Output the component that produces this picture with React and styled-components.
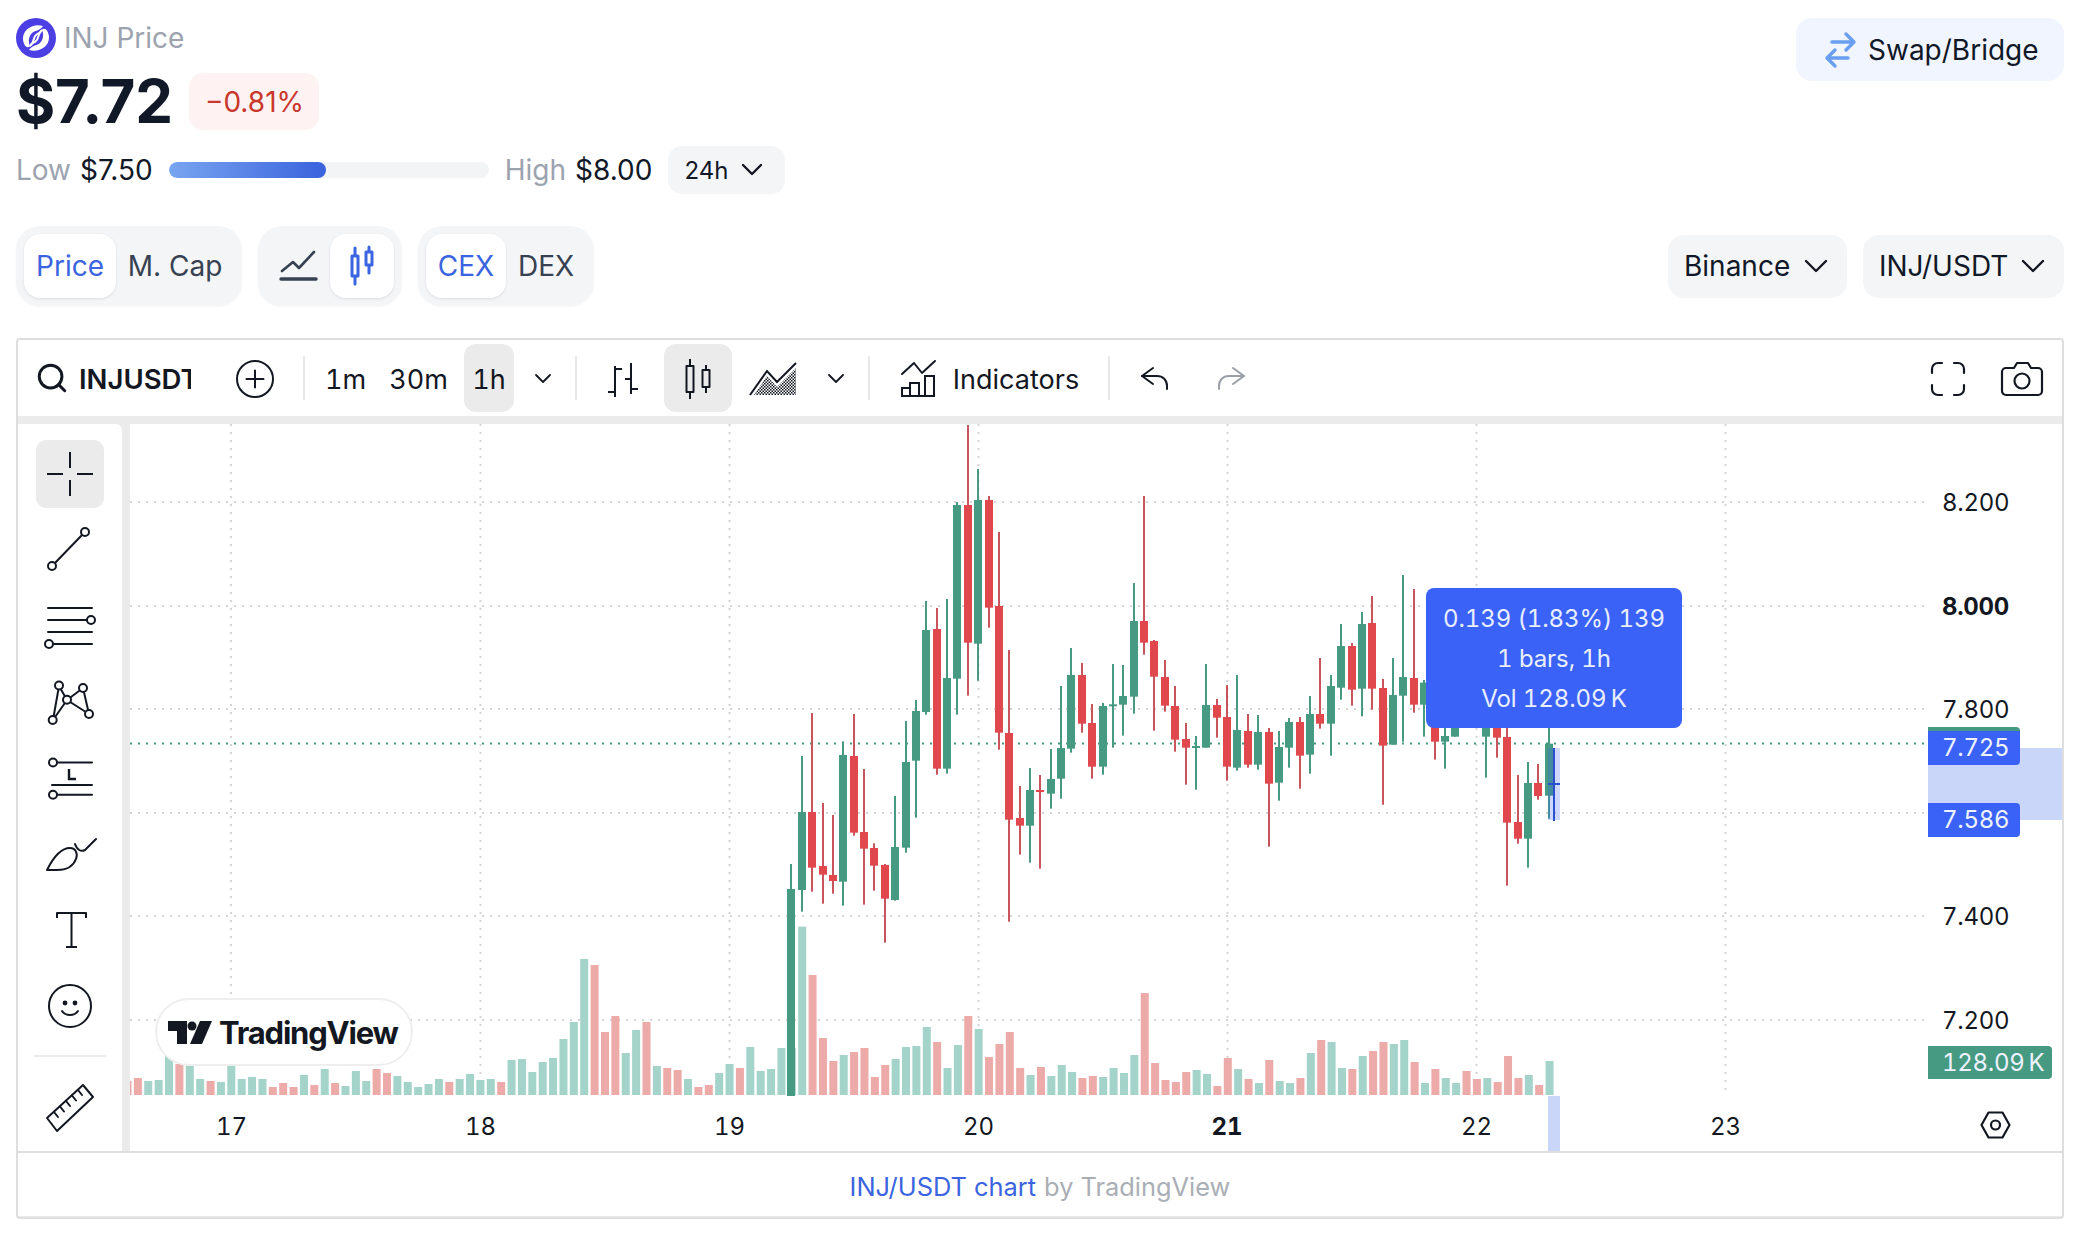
import React from 'react';
import styled, { createGlobalStyle } from 'styled-components';
import { Search } from 'lucide-react';

const GlobalStyle = createGlobalStyle`
  html, body {
    margin: 0;
    padding: 0;
    background: #fff;
    font-family: Inter, "Liberation Sans", sans-serif;
    color: #111827;
  }
  * { box-sizing: border-box; }
`;

const Page = styled.div`
  width: 2076px;
  height: 1236px;
  padding: 18px 12px 0 16px;
  overflow: hidden;
`;

const TopRow = styled.div`
  display: flex;
  justify-content: space-between;
  align-items: flex-start;
`;

const InfoCol = styled.div`
  display: flex;
  flex-direction: column;
`;

const TitleRow = styled.div`
  display: flex;
  align-items: center;
  gap: 8px;
  height: 40px;
  font-size: 28px;
  color: #9ca3af;
`;

const PriceRow = styled.div`
  display: flex;
  align-items: center;
  gap: 16px;
  height: 57px;
  margin-top: 15px;
`;

const BigPrice = styled.div`
  font-size: 60px;
  font-weight: 700;
  letter-spacing: -0.2px;
  color: #111827;
  line-height: 57px;
`;

const ChangeBadge = styled.div`
  display: flex;
  align-items: center;
  height: 57px;
  padding: 0 15px 0 16px;
  border-radius: 14px;
  background: #fef2f2;
  color: #c9372c;
  font-size: 28px;
`;

const RangeRow = styled.div`
  display: flex;
  align-items: center;
  height: 48px;
  margin-top: 16px;
  font-size: 28px;
`;

const Muted = styled.span`
  color: #9ca3af;
  margin-right: 9px;
`;

const Value = styled.span`
  color: #111827;
`;

const RangeTrack = styled.div`
  width: 320px;
  height: 16px;
  margin: 0 16px;
  border-radius: 8px;
  background: #f3f4f6;
  overflow: hidden;
`;

const RangeFill = styled.div`
  height: 100%;
  border-radius: 8px;
  background: linear-gradient(90deg, #78a5f0, #3a62dd);
`;

const PeriodChip = styled.div`
  display: flex;
  align-items: center;
  gap: 14px;
  height: 48px;
  margin-left: 16px;
  padding: 0 23px 0 16px;
  border-radius: 14px;
  background: #f3f5f7;
  font-size: 24px;
`;

const SwapButton = styled.div`
  display: flex;
  align-items: center;
  gap: 13px;
  width: 268px;
  height: 63px;
  padding-left: 29px;
  border-radius: 16px;
  background: #f0f5ff;
  font-size: 28px;
  color: #111827;
`;

const ControlRow = styled.div`
  display: flex;
  justify-content: space-between;
  align-items: center;
  height: 80px;
  margin-top: 32px;
`;

const Groups = styled.div`
  display: flex;
  gap: 16px;
`;

const Segment = styled.div`
  display: flex;
  height: 80px;
  padding: 8px;
  border-radius: 24px;
  background: #f3f5f7;
  box-shadow: 0 1px 2px rgba(17, 24, 39, 0.04);
`;

const SegmentItem = styled.div`
  display: flex;
  align-items: center;
  justify-content: center;
  width: ${(p) => p.$w}px;
  border-radius: 16px;
  font-size: 28px;
  color: ${(p) => (p.$active ? '#3b64e0' : '#374151')};
  background: ${(p) => (p.$active ? '#fff' : 'transparent')};
  box-shadow: ${(p) => (p.$active ? '0 1px 3px rgba(17, 24, 39, 0.1)' : 'none')};
`;

const Selects = styled.div`
  display: flex;
  gap: 16px;
`;

const SelectBox = styled.div`
  display: flex;
  align-items: center;
  justify-content: space-between;
  width: ${(p) => p.$w}px;
  height: 63px;
  padding: 0 20px 0 16px;
  border-radius: 16px;
  background: #f3f5f7;
  font-size: 28px;
  color: #111827;
`;

const ChartFrame = styled.div`
  height: 881px;
  margin-top: 32px;
  border: 2px solid #dedede;
  border-radius: 4px;
  background: #ebebeb;
  overflow: hidden;
`;

const TvToolbar = styled.div`
  display: flex;
  align-items: center;
  height: 76px;
  margin-bottom: 8px;
  background: #fff;
  color: #131722;
  font-variant-numeric: tabular-nums;
`;

const SearchBox = styled.div`
  display: flex;
  align-items: center;
  gap: 10px;
  width: 190px;
  padding-left: 17px;
`;

const SymbolName = styled.div`
  width: 112px;
  overflow: hidden;
  white-space: nowrap;
  font-size: 27.500px;
  font-weight: 600;
  padding-top: 1px;
`;

const TvButton = styled.div`
  display: flex;
  align-items: center;
  justify-content: center;
  gap: 17px;
  flex: none;
  width: ${(p) => p.$w}px;
  height: 68px;
  margin-left: ${(p) => p.$ml || 0}px;
  padding-top: 2px;
  border-radius: 12px;
  background: ${(p) => (p.$active ? '#ebebeb' : 'transparent')};
  font-size: 27px;
  color: #131722;
`;

const TvSep = styled.div`
  flex: none;
  width: 2px;
  height: 44px;
  margin-left: ${(p) => p.$ml}px;
  background: #e8e8e8;
`;

const Spacer = styled.div`
  flex: 1;
`;

const ChartBody = styled.div`
  display: flex;
  gap: 8px;
  height: 727px;
`;

const LeftTools = styled.div`
  display: flex;
  flex-direction: column;
  align-items: center;
  gap: 8px;
  flex: none;
  width: 104px;
  padding-top: 16px;
  border-top-right-radius: 6px;
  background: #fff;
`;

const ToolButton = styled.div`
  display: flex;
  align-items: center;
  justify-content: center;
  flex: none;
  width: 68px;
  height: 68px;
  border-radius: 10px;
  background: ${(p) => (p.$active ? '#ebebeb' : 'transparent')};
`;

const ToolDivider = styled.div`
  flex: none;
  width: 72px;
  height: 2px;
  margin: 7px 0 9px;
  background: #ebebeb;
`;

const Plot = styled.div`
  position: relative;
  flex: 1;
  background: #fff;
  overflow: hidden;
`;

const PlotSvg = styled.svg`
  display: block;
  width: 100%;
  height: 100%;
  font-family: Inter, "Liberation Sans", sans-serif;
  font-variant-numeric: tabular-nums;
`;

const MeasureBox = styled.div`
  position: absolute;
  left: 1296px;
  top: 164px;
  width: 256px;
  height: 140px;
  padding-top: 11px;
  border-radius: 8px;
  background: #3b62f6;
  color: #e9eeff;
  font-size: 24px;
  line-height: 40px;
  text-align: center;
  letter-spacing: -0.1px;
  font-variant-numeric: tabular-nums;
`;

const PriceTag = styled.div`
  position: absolute;
  left: 1798px;
  top: ${(p) => p.$top}px;
  width: ${(p) => p.$w || 92}px;
  height: ${(p) => p.$h}px;
  border-radius: 0 4px 4px 0;
  border-top: ${(p) => (p.$strip ? '4px solid #469a82' : 'none')};
  background: ${(p) => p.$bg};
  color: #eef2ff;
  font-size: 24px;
  line-height: ${(p) => p.$h - (p.$strip ? 4 : 0)}px;
  padding-left: 14px;
  letter-spacing: -0.3px;
  font-variant-numeric: tabular-nums;
`;

const PriceBand = styled.div`
  position: absolute;
  left: 1798px;
  top: 324px;
  right: 0;
  height: 72px;
  background: #c9d6f9;
`;

const TvLogoPill = styled.div`
  position: absolute;
  left: 25px;
  top: 574px;
  display: flex;
  align-items: center;
  gap: 7px;
  width: 258px;
  height: 68px;
  padding-left: 11px;
  border: 2px solid #eeeeee;
  border-radius: 34px;
  background: #fff;
  color: #131722;
  font-size: 31px;
  font-weight: 700;
  letter-spacing: -1.2px;
`;

const ChartFooter = styled.div`
  display: flex;
  align-items: center;
  justify-content: center;
  gap: 8px;
  height: 65px;
  padding-top: 3px;
  border-top: 2px solid #dedede;
  background: #fff;
  font-size: 25.400px;
  color: #aaaeb5;
`;

const FooterLink = styled.span`
  color: #3b64e0;
`;

// chart data, read off the picture at 3x: [x, wickTop, wickBottom, bodyTop, bodyBottom, colour]
const candlesA = [
  [93, 1332, 2028, 1407, 2028, 'g'], [126, 1008, 1475, 1176, 1410, 'g'], [156, 879, 1415, 1176, 1343, 'r'],
  [189, 1149, 1451, 1338, 1364, 'r'], [219, 1185, 1421, 1365, 1383, 'r'], [249, 964, 1457, 1005, 1385, 'g'],
  [282, 882, 1247, 1008, 1238, 'r'], [312, 1047, 1454, 1236, 1286, 'r'], [342, 1270, 1412, 1284, 1337, 'r'],
  [375, 1332, 1568, 1335, 1436, 'r'], [405, 1128, 1442, 1281, 1440, 'g'], [438, 903, 1298, 1026, 1283, 'g'],
  [468, 840, 1193, 873, 1022, 'g'], [498, 543, 884, 630, 876, 'g'], [531, 564, 1064, 627, 1046, 'r'],
  [561, 537, 1061, 774, 1046, 'g'], [591, 246, 884, 255, 776, 'g'], [624, 15, 827, 255, 668, 'r'],
  [654, 147, 782, 240, 671, 'g'], [687, 228, 623, 240, 563, 'r'], [717, 336, 989, 558, 938, 'r'],
  [747, 690, 1505, 939, 1199, 'r'], [780, 1098, 1304, 1194, 1217, 'r'], [810, 1044, 1328, 1110, 1217, 'g'],
  [840, 1065, 1346, 1110, 1115, 'r'], [873, 987, 1166, 1077, 1121, 'g'], [903, 798, 1136, 984, 1076, 'g'],
  [933, 684, 998, 765, 986, 'g'], [966, 729, 938, 765, 911, 'r'], [996, 852, 1076, 909, 1040, 'r'],
  [1029, 849, 1064, 858, 1040, 'g'], [1059, 732, 983, 853, 857, 'g'], [1089, 735, 947, 828, 854, 'g'],
  [1122, 489, 881, 603, 830, 'g'], [1152, 228, 704, 603, 668, 'r'], [1182, 660, 932, 663, 770, 'r'],
];

const candlesB = [
  [75, 720, 875, 771, 857, 'r'], [105, 798, 995, 858, 959, 'r'], [138, 909, 1094, 957, 983, 'r'],
  [168, 948, 1109, 978, 983, 'g'], [198, 732, 983, 855, 983, 'g'], [231, 837, 953, 855, 893, 'r'],
  [261, 795, 1082, 891, 1040, 'r'], [291, 765, 1052, 930, 1043, 'g'], [324, 882, 1043, 933, 1034, 'r'],
  [354, 885, 1049, 936, 1034, 'g'], [387, 924, 1280, 936, 1091, 'r'], [417, 933, 1142, 981, 1088, 'g'],
  [447, 894, 1043, 906, 983, 'g'], [480, 891, 1106, 906, 1007, 'r'], [510, 828, 1061, 882, 1004, 'g'],
  [540, 714, 926, 882, 911, 'r'], [573, 765, 1007, 798, 911, 'g'], [603, 612, 839, 678, 803, 'g'],
  [636, 669, 857, 678, 809, 'r'], [666, 576, 889, 612, 806, 'g'], [696, 528, 869, 609, 806, 'r'],
  [729, 777, 1154, 804, 977, 'r'], [759, 714, 974, 825, 974, 'g'], [789, 465, 965, 771, 827, 'g'],
  [822, 507, 878, 774, 854, 'r'], [852, 780, 950, 788, 854, 'g'], [885, 800, 1019, 850, 965, 'r'],
  [915, 850, 1046, 948, 965, 'g'], [945, 840, 950, 880, 950, 'g'], [1038, 800, 1073, 850, 950, 'g'],
  [1071, 800, 1013, 880, 953, 'r'], [1101, 900, 1397, 951, 1208, 'r'], [1134, 1065, 1271, 1206, 1256, 'r'],
  [1164, 1026, 1343, 1089, 1256, 'g'], [1194, 1032, 1139, 1089, 1128, 'r'], [1227, 920, 1196, 971, 1127, 'g'],
];

const allCandles = [
  ...candlesA.map((c) => [760 + c[0] / 3, ...c.slice(1)]),
  ...candlesB.map((c) => [1140 + c[0] / 3, ...c.slice(1)]),
];

const volumeLeft = `r423 r414 g423 g420 g345 r372 g378 g417 r423 g426 g378 g417 g411 g417 r441 r429 r441 g405 r435 g387
  r429 g438 g393 g423 r387 r399 g408 g426 g441 g432 g417 r426 g417 g402 g420 g417 r426 g360 g357 g396 g366 g354 g297
  g246 g57 r75 r276 r228 g339 g270 r246 g378 r384 r390 g417 r441 r435 g399 g372 r384 g321 g393 g387 g324 g324 g-40`;

const volumeRight = `r105 r294 r363 g345 r336 r324 r411 r375 g357 g321 g318 g261 r306 g384 g315 r228 g267 r351 r312 r276
  r384 g405 r381 g408 g375 g396 r414 r408 g411 g384 g399 g345 r159 r369 r420 r426 r396 g390 g402 r438 r354 g387 r417 g429
  r360 g423 g429 r414 g339 r300 g306 g384 r387 g348 r333 r306 g312 g300 r366 g429 r387 g414 g429 r393 r417 g414 r426 r348
  r414 g405 r435 g363`;

const volumes = `${volumeLeft} ${volumeRight}`
  .trim()
  .split(/\s+/)
  .map((t, i) => ({ x: 127.5 + i * 10.38, top: 940 + Number(t.slice(1)) / 3, red: t[0] === 'r' }));

const GREEN = '#469a82';
const RED = '#e0484e';
const RED_WICK = '#c9545c';
const GRID = '#d4d4d4';
const INK = '#131722';

const gridX = [231, 480.500, 729.500, 978.500, 1227.500, 1476.500, 1725.500];
const gridY = [502, 606, 709, 813, 916, 1020];

const priceTicks = [
  { y: 502, label: '8.200' },
  { y: 606, label: '8.000', bold: true },
  { y: 709, label: '7.800' },
  { y: 916, label: '7.400' },
  { y: 1020, label: '7.200' },
];

const timeTicks = [
  { x: 231.500, label: '17' },
  { x: 480.500, label: '18' },
  { x: 729.500, label: '19' },
  { x: 978.500, label: '20' },
  { x: 1227, label: '21', bold: true },
  { x: 1476.500, label: '22' },
  { x: 1725.500, label: '23' },
];

const ChartDrawing = () => (
  <PlotSvg viewBox="130 424 1932 727">
    <defs>
      <clipPath id="plot-clip">
        <rect x="130" y="424" width="1798" height="727" />
      </clipPath>
    </defs>
    <g stroke={GRID} strokeWidth="2" strokeDasharray="2 6">
      {gridX.map((x) => (
        <line key={x} x1={x} x2={x} y1="424" y2="1096" />
      ))}
      {gridY.map((y) => (
        <line key={y} x1="130" x2="1924" y1={y} y2={y} />
      ))}
    </g>
    <line x1="130" x2="1924" y1="743.500" y2="743.500" stroke={GREEN} strokeWidth="2" strokeDasharray="2 6" />
    <g clipPath="url(#plot-clip)">
      {volumes.map((v, i) => (
        <rect key={i} x={v.x - 4} y={v.top} width="8" height={1095 - v.top} fill={v.red ? '#ecaaa8' : '#a3d3c9'} />
      ))}
      {allCandles.map(([x, wt, wb, bt, bb, c], i) => {
        const y = (n) => 420 + n / 3;
        return (
          <g key={i}>
            <rect x={x - 1} y={y(wt)} width="2" height={(wb - wt) / 3} fill={c === 'r' ? RED_WICK : GREEN} />
            <rect x={x - 4} y={y(bt)} width="8" height={Math.max((bb - bt) / 3, 2)} fill={c === 'r' ? RED : GREEN} />
          </g>
        );
      })}
    </g>
    <rect x="1548" y="748" width="12" height="72" fill="#3b62f6" opacity="0.25" />
    <rect x="1553" y="748" width="2" height="73" fill="#2c4fd0" />
    <rect x="1548" y="783" width="12" height="2" fill="#2c4fd0" />
    <rect x="1548" y="1096" width="12" height="55" fill="#c9d6f9" />
    <g fontSize="24" fill={INK}>
      {priceTicks.map((t) => (
        <text key={t.label} x="1942" y={t.y + 9} fontWeight={t.bold ? 700 : 400} letterSpacing="-0.3">
          {t.label}
        </text>
      ))}
      {timeTicks.map((t) => (
        <text key={t.label} x={t.x} y="1135" textAnchor="middle" fontWeight={t.bold ? 700 : 400}>
          {t.label}
        </text>
      ))}
    </g>
    <path d="M1981.500 1125l7-12.500h14l7 12.500-7 12.500h-14z" fill="none" stroke={INK} strokeWidth="2.200" strokeLinejoin="round" />
    <circle cx="1995.500" cy="1125" r="4.500" fill="none" stroke={INK} strokeWidth="2.200" />
  </PlotSvg>
);

const Svg = ({ w, h, children, color = INK, sw = 2, dy = 0, dx = 0 }) => (
  <svg
    width={w}
    height={h}
    viewBox={`${-dx} ${-dy} ${w} ${h}`}
    fill="none"
    stroke={color}
    strokeWidth={sw}
    strokeLinecap="round"
    strokeLinejoin="round"
    style={{ overflow: 'visible', flex: 'none' }}
  >
    {children}
  </svg>
);

const Chevron = ({ w = 22, color = INK, sw = 2.4 }) => (
  <Svg w={w} h={Math.round(w / 2) + 2} color={color} sw={sw}>
    <path d={`M1 1L${w / 2} ${w / 2}L${w - 1} 1`} />
  </Svg>
);

const InjLogo = () => (
  <svg width="40" height="40" viewBox="0 0 40 40" style={{ flex: 'none' }}>
    <circle cx="20" cy="20" r="20" fill="#4b3fe4" />
    <path
      d="M27 8C18 5 6.500 11 7 21C7.300 27 11 31 14 28.500C11.500 23 13 15 19.500 13C23 12 25.500 10.500 27 8Z"
      fill="#fff"
    />
    <path
      d="M13 32C22 35 33.500 29 33 19C32.700 13 29 9 26 11.500C28.500 17 27 25 20.500 27C17 28 14.500 29.500 13 32Z"
      fill="#fff"
    />
    <path d="M14 28C19 24 17 19 20 17C22 15 25 15 26 12" fill="none" stroke="#fff" strokeWidth="2" />
    <path d="M14 28C15 25 18 25 20 23C23 21 21 16 26 12" fill="none" stroke="#fff" strokeWidth="2" />
  </svg>
);

const SwapIcon = () => (
  <Svg w={30} h={34} color="#6a9eee" sw={3.4}>
    <path d="M7 9H29M21 1l8 8-8 8" />
    <path d="M23 25H2M10 17l-8 8 8 8" />
  </Svg>
);

const LineIcon = () => (
  <Svg w={35} h={30} color="#374151" sw={2.6}>
    <path d="M1 20l11-9 6 6L33 1" />
    <path d="M0 28H35" strokeWidth="3.400" />
  </Svg>
);

const CandleBlueIcon = () => (
  <Svg w={24} h={38} color="#3b64e0" sw={3}>
    <path d="M5 1v36M19 0v26" />
    <rect x="2" y="9" width="6" height="20" fill="#fff" />
    <rect x="16" y="5" width="6" height="13" fill="#fff" />
  </Svg>
);

const PlusCircleIcon = () => (
  <Svg w={38} h={38}>
    <circle cx="19" cy="19" r="18" />
    <path d="M19 10.500v17M10.500 19h17" />
  </Svg>
);

const BarsIcon = () => (
  <Svg w={30} h={36} sw={2}>
    <path d="M7 5v31M7 8h7M0 31h7M23 2v31M17 18h6M23 28h7" strokeLinecap="butt" />
  </Svg>
);

const CandlesIcon = () => (
  <Svg w={24} h={40}>
    <path d="M4 0v40M20 6v28" strokeLinecap="butt" />
    <rect x="0.500" y="7" width="7" height="26" fill="#ebebeb" />
    <rect x="16.500" y="11" width="7" height="17" fill="#ebebeb" />
  </Svg>
);

const AreaIcon = () => (
  <svg width="48" height="34" viewBox="0 0 48 34" style={{ flex: 'none' }}>
    <defs>
      <pattern id="area-dots" width="3" height="3" patternUnits="userSpaceOnUse">
        <rect width="1.500" height="1.500" fill={INK} />
        <rect x="1.500" y="1.500" width="1.500" height="1.500" fill={INK} />
      </pattern>
    </defs>
    <path d="M5 33L18 14 28 25 47 6V33Z" fill="url(#area-dots)" />
    <path d="M1 33L18 9 28 20 47 1" fill="none" stroke={INK} strokeWidth="2" />
  </svg>
);

const IndicatorsIcon = () => (
  <Svg w={35} h={36} sw={2}>
    <path d="M1 13L13 2l8 10L34 0" />
    <rect x="1" y="27" width="8" height="8" strokeLinejoin="miter" />
    <rect x="9" y="22" width="9" height="13" strokeLinejoin="miter" />
    <rect x="24" y="15" width="9" height="20" strokeLinejoin="miter" />
    <path d="M18 35h6" />
  </Svg>
);

const UndoIcon = ({ color }) => (
  <Svg w={28} h={24} color={color}>
    <path d="M12 1L1 9l11 8" />
    <path d="M1 9h15c6 0 10 4 10 10v3" />
  </Svg>
);

const RedoIcon = ({ color }) => (
  <Svg w={28} h={24} color={color}>
    <path d="M16 1l11 8-11 8" />
    <path d="M27 9H12C6 9 2 13 2 19v3" />
  </Svg>
);

const FullscreenIcon = () => (
  <Svg w={34} h={34} sw={2.2}>
    <path d="M11 1H7a6 6 0 0 0-6 6v4M23 1h4a6 6 0 0 1 6 6v4M11 33H7a6 6 0 0 1-6-6v-4M23 33h4a6 6 0 0 0 6-6v-4" />
  </Svg>
);

const CameraIcon = () => (
  <Svg w={42} h={34} sw={2.2} dx={1}>
    <path d="M13 6l3-5h11l3 5h7a4 4 0 0 1 4 4v19a4 4 0 0 1-4 4H5a4 4 0 0 1-4-4V10a4 4 0 0 1 4-4z" />
    <circle cx="21" cy="19" r="7.500" />
  </Svg>
);

const Tool = ({ children, dy = 0 }) => <Svg w={52} h={52} dx={1} dy={dy}>{children}</Svg>;

const Knob = ({ x, y }) => <circle cx={x} cy={y} r="4" fill="#fff" />;

const toolIcons = [
  <Svg key="cross" w={52} h={52}>
    <path d="M3 26H19M33 26H49M26 4V20M26 32V48" strokeLinecap="butt" />
  </Svg>,
  <Tool key="line" dy={1}>
    <path d="M9 39L37 10" />
    <Knob x={7} y={41} />
    <Knob x={40} y={7} />
  </Tool>,
  <Tool key="parallel" dy={1}>
    <path d="M3 7H47M3 19H47M3 31H47M8 43H47" />
    <Knob x={46} y={19} />
    <Knob x={4} y={43} />
  </Tool>,
  <Tool key="pattern" dy={1}>
    <path d="M8 43L14 9 22 23 8 43M22 23L38 11 44 37 22 23" />
    <Knob x={14} y={8.500} />
    <Knob x={38} y={11} />
    <Knob x={22} y={22.700} />
    <Knob x={7.700} y={43} />
    <Knob x={44} y={37} />
  </Tool>,
  <Tool key="fib" dy={2}>
    <path d="M12 8.500H47M7 31H47M12 40.700H47" />
    <Knob x={8} y={8.500} />
    <Knob x={8} y={40.700} />
    <path d="M24 15V25H31" strokeWidth="2.400" strokeLinecap="butt" strokeLinejoin="miter" />
  </Tool>,
  <Tool key="brush" dy={2}>
    <path d="M2 40C8 28 16 18 25 18C31 18 33 24 31 29C28 37 20 40 12 40Z" />
    <path d="M30 14C32 20 36 22 40 20L51 9" />
  </Tool>,
  <Tool key="text">
    <path d="M12 14V9H41V14M26.500 9V43M21 43H32" strokeLinecap="butt" />
  </Tool>,
  <Tool key="smile" dy={1}>
    <circle cx="25" cy="25" r="21" />
    <circle cx="20" cy="22" r="1.400" fill={INK} />
    <circle cx="30" cy="22" r="1.400" fill={INK} />
    <path d="M17 30c2 3 5 4 8 4s6-1 8-4" />
  </Tool>,
];

const RulerIcon = () => (
  <Tool>
    <path d="M2 36L38 3 48 15 12 49Z" />
    <path d="M9 30l4 5M15 24.500l4 5M21 19l4 5M27 13.500l4 5M33 8l4 5" />
  </Tool>
);

const App = () => (
  <>
    <GlobalStyle />
    <Page>
      <TopRow>
        <InfoCol>
          <TitleRow>
            <InjLogo />
            INJ Price
          </TitleRow>
          <PriceRow>
            <BigPrice>$7.72</BigPrice>
            <ChangeBadge>−0.81%</ChangeBadge>
          </PriceRow>
          <RangeRow>
            <Muted>Low</Muted>
            <Value>$7.50</Value>
            <RangeTrack>
              <RangeFill style={{ width: '49%' }} />
            </RangeTrack>
            <Muted>High</Muted>
            <Value>$8.00</Value>
            <PeriodChip>
              24h
              <Chevron w={20} />
            </PeriodChip>
          </RangeRow>
        </InfoCol>
        <SwapButton>
          <SwapIcon />
          Swap/Bridge
        </SwapButton>
      </TopRow>

      <ControlRow>
        <Groups>
          <Segment>
            <SegmentItem $active $w={92}>Price</SegmentItem>
            <SegmentItem $w={118}>M. Cap</SegmentItem>
          </Segment>
          <Segment>
            <SegmentItem $w={64}><LineIcon /></SegmentItem>
            <SegmentItem $active $w={64}><CandleBlueIcon /></SegmentItem>
          </Segment>
          <Segment>
            <SegmentItem $active $w={80}>CEX</SegmentItem>
            <SegmentItem $w={80}>DEX</SegmentItem>
          </Segment>
        </Groups>
        <Selects>
          <SelectBox $w={179}>
            Binance
            <Chevron w={22} />
          </SelectBox>
          <SelectBox $w={201}>
            INJ/USDT
            <Chevron w={22} />
          </SelectBox>
        </Selects>
      </ControlRow>

      <ChartFrame>
        <TvToolbar>
          <SearchBox>
            <Search size={34} strokeWidth={2.1} color={INK} />
            <SymbolName>INJUSDT</SymbolName>
          </SearchBox>
          <TvButton $w={66} $ml={14}><PlusCircleIcon /></TvButton>
          <TvSep $ml={15} />
          <TvButton $w={57} $ml={12}>1m</TvButton>
          <TvButton $w={73} $ml={8}>30m</TvButton>
          <TvButton $w={50} $ml={9} $active>1h</TvButton>
          <TvButton $w={38} $ml={10}><Chevron w={16} sw={1.8} /></TvButton>
          <TvSep $ml={13} />
          <TvButton $w={58} $ml={17}><BarsIcon /></TvButton>
          <TvButton $w={68} $ml={12} $active><CandlesIcon /></TvButton>
          <TvButton $w={56} $ml={13}><AreaIcon /></TvButton>
          <TvButton $w={38} $ml={16}><Chevron w={16} sw={1.8} /></TvButton>
          <TvSep $ml={13} />
          <TvButton $w={200} $ml={20}>
            <IndicatorsIcon />
            Indicators
          </TvButton>
          <TvSep $ml={18} />
          <TvButton $w={60} $ml={15}><UndoIcon /></TvButton>
          <TvButton $w={60} $ml={16}><RedoIcon color="#9a9ea6" /></TvButton>
          <Spacer />
          <TvButton $w={60}><FullscreenIcon /></TvButton>
          <TvButton $w={60} $ml={13}><CameraIcon /></TvButton>
          <TvButton $w={11} />
        </TvToolbar>

        <ChartBody>
          <LeftTools>
            {toolIcons.map((icon, i) => (
              <ToolButton key={i} $active={i === 0}>{icon}</ToolButton>
            ))}
            <ToolDivider />
            <ToolButton><RulerIcon /></ToolButton>
          </LeftTools>
          <Plot>
            <ChartDrawing />
            <MeasureBox>
              <div>0.139 (1.83%) 139</div>
              <div>1 bars, 1h</div>
              <div>Vol 128.09{'\u2009'}K</div>
            </MeasureBox>
            <PriceBand />
            <PriceTag $top={303} $h={38} $bg="#3b62f6" $strip>7.725</PriceTag>
            <PriceTag $top={379} $h={34} $bg="#3b62f6">7.586</PriceTag>
            <PriceTag $top={622} $h={33} $w={124} $bg={GREEN}>128.09{'\u2009'}K</PriceTag>
            <TvLogoPill>
              <svg width="44" height="23" viewBox="0 0 44 23" style={{ flex: 'none' }}>
                <path d="M0 0H19V23H9V10H0Z" fill={INK} />
                <circle cx="24" cy="5" r="4.500" fill={INK} />
                <path d="M32 0H44L34 23H22Z" fill={INK} />
              </svg>
              TradingView
            </TvLogoPill>
          </Plot>
        </ChartBody>

        <ChartFooter>
          <FooterLink>INJ/USDT chart</FooterLink>
          by TradingView
        </ChartFooter>
      </ChartFrame>
    </Page>
  </>
);

export default App;
